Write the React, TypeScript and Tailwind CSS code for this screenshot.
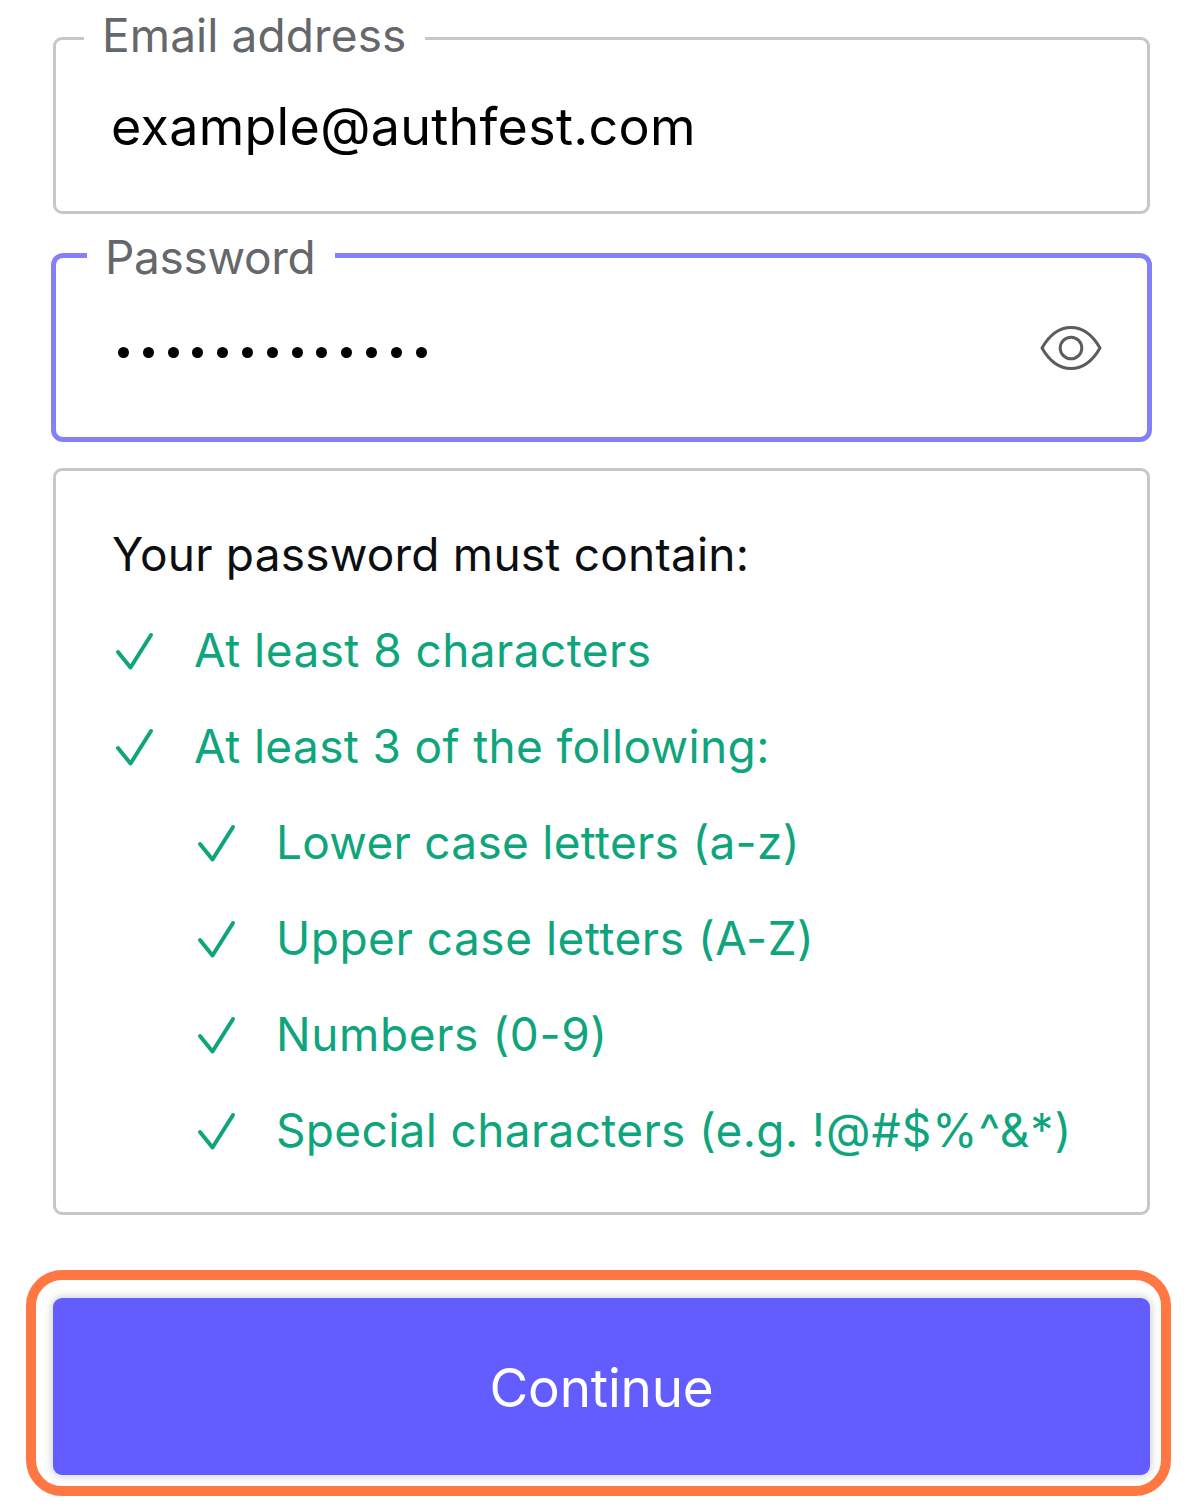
import clsx from 'clsx';
import type { ReactNode } from 'react';

const PASSWORD_LENGTH = 13;

const RULES = [
  { label: 'At least 8 characters', tracking: 'tracking-[0.43px]' },
  { label: 'At least 3 of the following:', tracking: 'tracking-[0.35px]' },
  { label: 'Lower case letters (a-z)', tracking: 'tracking-[0.28px]', nested: true },
  { label: 'Upper case letters (A-Z)', tracking: 'tracking-[0.52px]', nested: true },
  { label: 'Numbers (0-9)', tracking: 'tracking-[0.6px]', nested: true },
  { label: 'Special characters (e.g. ', symbols: '!@#$%^&*)', tracking: 'tracking-[0.34px]', nested: true },
];

export default function App() {
  return (
    <div className="w-[1200px] h-[1512px] overflow-hidden bg-white font-['Inter','Liberation_Sans',sans-serif] pt-[10px]">
      <Field
        label="Email address"
        className="mx-[53px] w-[1097px] h-[204px] border-[3px] border-[#c7c7c7] rounded-[9px] pl-[28px]"
        legendClassName="leading-[50px] tracking-[0.1px]"
      >
        <span className="ml-[27px] mt-[31px] text-[52px] leading-[60px] tracking-[0.3px] text-black">example@authfest.com</span>
      </Field>

      <Field
        label="Password"
        className="mx-[51px] mt-[13px] w-[1101px] h-[215px] border-[5px] border-[#8480fa] rounded-[12px] pl-[31px]"
        legendClassName="leading-[60px] tracking-[-0.3px]"
      >
        <div className="ml-[31px] mt-[64px] flex gap-[13.8px]">
          {Array.from({ length: PASSWORD_LENGTH }, (_, i) => (
            <span key={i} className="size-[11px] rounded-full bg-black" />
          ))}
        </div>
        <EyeIcon />
      </Field>

      <section className="mx-[53px] mt-[26px] w-[1097px] h-[747px] border-[3px] border-[#c7c7c7] rounded-[9px] pl-[56px] pt-[35px]">
        <h2 className="text-[46px] leading-[96px] tracking-[0.22px] text-[#0d0e12]">Your password must contain:</h2>
        <ul className="pl-px">
          {RULES.map((rule) => (
            <li
              key={rule.label}
              className={clsx('flex h-[96px] items-center text-[46px] text-[#0fa57c] whitespace-nowrap', rule.tracking, rule.nested && 'pl-[82px]')}
            >
              <CheckIcon />
              <span className="ml-[39px]">
                {rule.label}
                {rule.symbols && <span className="tracking-[1.05px]">{rule.symbols}</span>}
              </span>
            </li>
          ))}
        </ul>
      </section>

      <div className="ml-[26px] mt-[55px] w-[1145px] h-[226px] border-[10px] border-[#ff7844] rounded-[36px] pl-[17px] pt-[18px]">
        <button className="block w-[1097px] h-[177px] pt-[5px] rounded-[9px] bg-[#635dff] text-[53px] tracking-[-0.2px] text-white shadow-[0_0_9px_1px_rgba(60,85,85,0.28)]">
          Continue
        </button>
      </div>
    </div>
  );
}

function Field({ label, className, legendClassName, children }: { label: string; className: string; legendClassName: string; children: ReactNode }) {
  return (
    <fieldset className={className}>
      <legend className={clsx('h-[56px] pl-[18px] pr-[19px] text-[46px] text-[#65676b]', legendClassName)}>{label}</legend>
      <div className="flex items-start">{children}</div>
    </fieldset>
  );
}

function EyeIcon() {
  return (
    <svg className="ml-auto mr-[45px] mt-[42px] shrink-0" width="62" height="46" viewBox="0 0 62 46" fill="none" stroke="#5a5c60" strokeWidth="3" strokeLinejoin="round">
      <path d="M2 23C10 9 19 2.5 31 2.5s21 6.5 29 20.5C52 37 43 43.5 31 43.5S10 37 2 23Z" />
      <circle cx="31" cy="23" r="10.8" />
    </svg>
  );
}

function CheckIcon() {
  return (
    <svg className="mt-[2px] shrink-0" width="42" height="42" viewBox="0 0 42 42" fill="none" stroke="currentColor" strokeWidth="4" strokeLinecap="round" strokeLinejoin="round">
      <path d="M5 22 17.5 37.5 38 5" />
    </svg>
  );
}
